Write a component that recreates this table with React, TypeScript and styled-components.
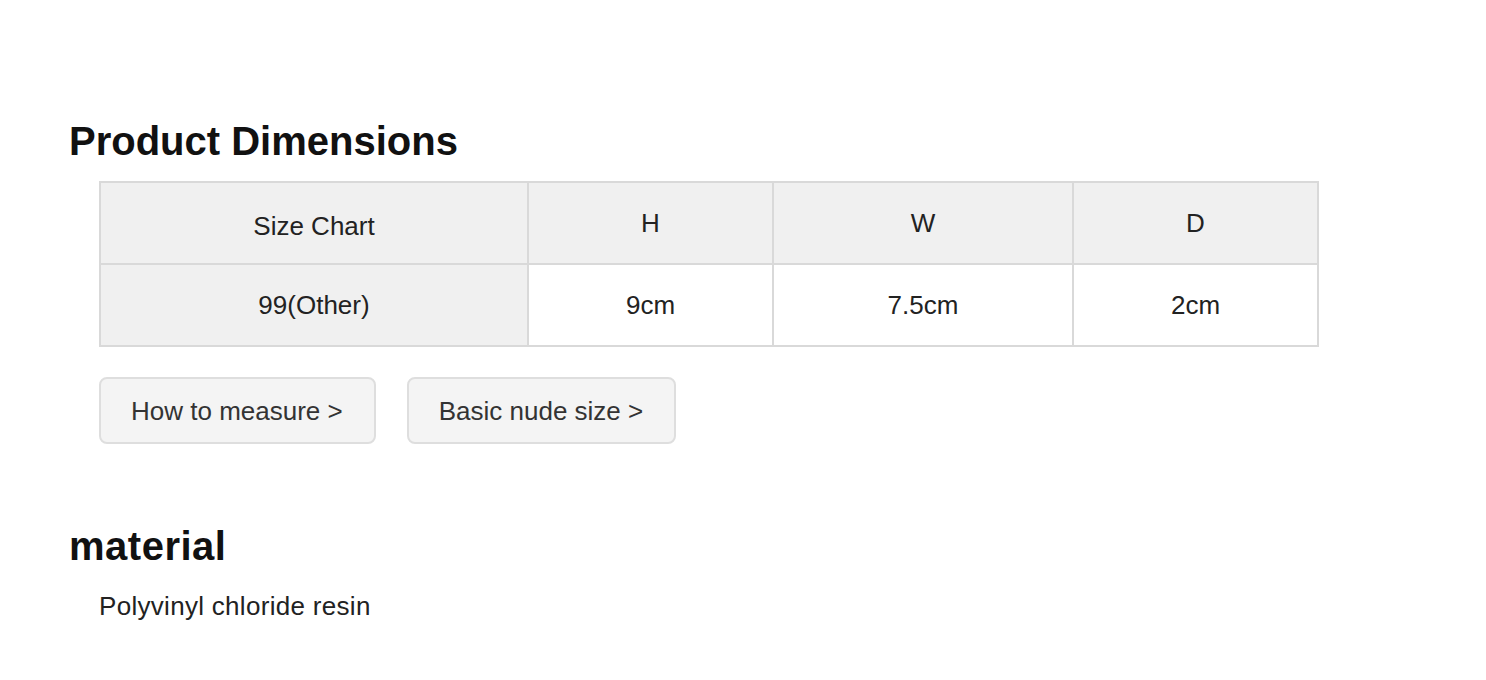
import React from "react";
import styled, { createGlobalStyle } from "styled-components";

const GlobalStyle = createGlobalStyle`
  html, body {
    margin: 0;
    padding: 0;
    background: #ffffff;
  }
  body {
    font-family: "Liberation Sans", Arial, sans-serif;
    color: #222;
  }
`;

const Page = styled.div`
  padding: 117px 0 0 69px;
  display: flex;
  flex-direction: column;
`;

const SectionTitle = styled.h2<{ $top?: number; $spacing?: number }>`
  margin: ${(p) => p.$top ?? 0}px 0 0 0;
  font-family: "Liberation Sans", Arial, sans-serif;
  font-size: 40px;
  line-height: 48px;
  font-weight: 700;
  color: #111;
  letter-spacing: ${(p) => p.$spacing ?? 0}px;
`;

const Table = styled.table`
  margin: 16px 0 0 30px;
  width: 1220px;
  border-spacing: 0;
  border-collapse: separate;
  border-top: 2px solid #d9d9d9;
  border-left: 2px solid #d9d9d9;
  table-layout: fixed;
`;

const Cell = styled.td<{ $shaded?: boolean; $shift?: number }>`
  box-sizing: border-box;
  height: 82px;
  padding: ${(p) => p.$shift ?? 0}px 0 0 0;
  border-right: 2px solid #d9d9d9;
  border-bottom: 2px solid #d9d9d9;
  background: ${(p) => (p.$shaded ? "#f0f0f0" : "#ffffff")};
  text-align: center;
  vertical-align: middle;
  font-size: 26px;
  line-height: 30px;
  font-weight: 400;
  color: #222;
`;

const ButtonRow = styled.div`
  display: flex;
  gap: 31px;
  margin: 30px 0 0 30px;
`;

const LinkButton = styled.a`
  box-sizing: border-box;
  display: inline-flex;
  align-items: center;
  height: 67px;
  padding: 0 31px 0 30px;
  border: 2px solid #dedede;
  border-radius: 8px;
  background: #f4f4f4;
  color: #333;
  font-size: 26px;
  line-height: 30px;
  text-decoration: none;
  white-space: nowrap;
  cursor: pointer;
`;

const Body = styled.p`
  margin: 21px 0 0 30px;
  font-size: 26px;
  line-height: 30px;
  letter-spacing: 0.3px;
  color: #222;
`;

const columns = [428, 245, 300, 245];
const headers = ["H", "W", "D"];
const values = ["9cm", "7.5cm", "2cm"];

export default function App() {
  return (
    <>
      <GlobalStyle />
      <Page>
        <SectionTitle>Product Dimensions</SectionTitle>
        <Table>
          <colgroup>
            {columns.map((w, i) => (
              <col key={i} style={{ width: w }} />
            ))}
          </colgroup>
          <tbody>
            <tr>
              <Cell as="th" $shaded $shift={6}>
                Size Chart
              </Cell>
              {headers.map((h) => (
                <Cell as="th" key={h} $shaded>
                  {h}
                </Cell>
              ))}
            </tr>
            <tr>
              <Cell $shaded>99(Other)</Cell>
              {values.map((v) => (
                <Cell key={v}>{v}</Cell>
              ))}
            </tr>
          </tbody>
        </Table>
        <ButtonRow>
          <LinkButton>How to measure &gt;</LinkButton>
          <LinkButton>Basic nude size &gt;</LinkButton>
        </ButtonRow>
        <SectionTitle $top={78} $spacing={0.5}>
          material
        </SectionTitle>
        <Body>Polyvinyl chloride resin</Body>
      </Page>
    </>
  );
}
